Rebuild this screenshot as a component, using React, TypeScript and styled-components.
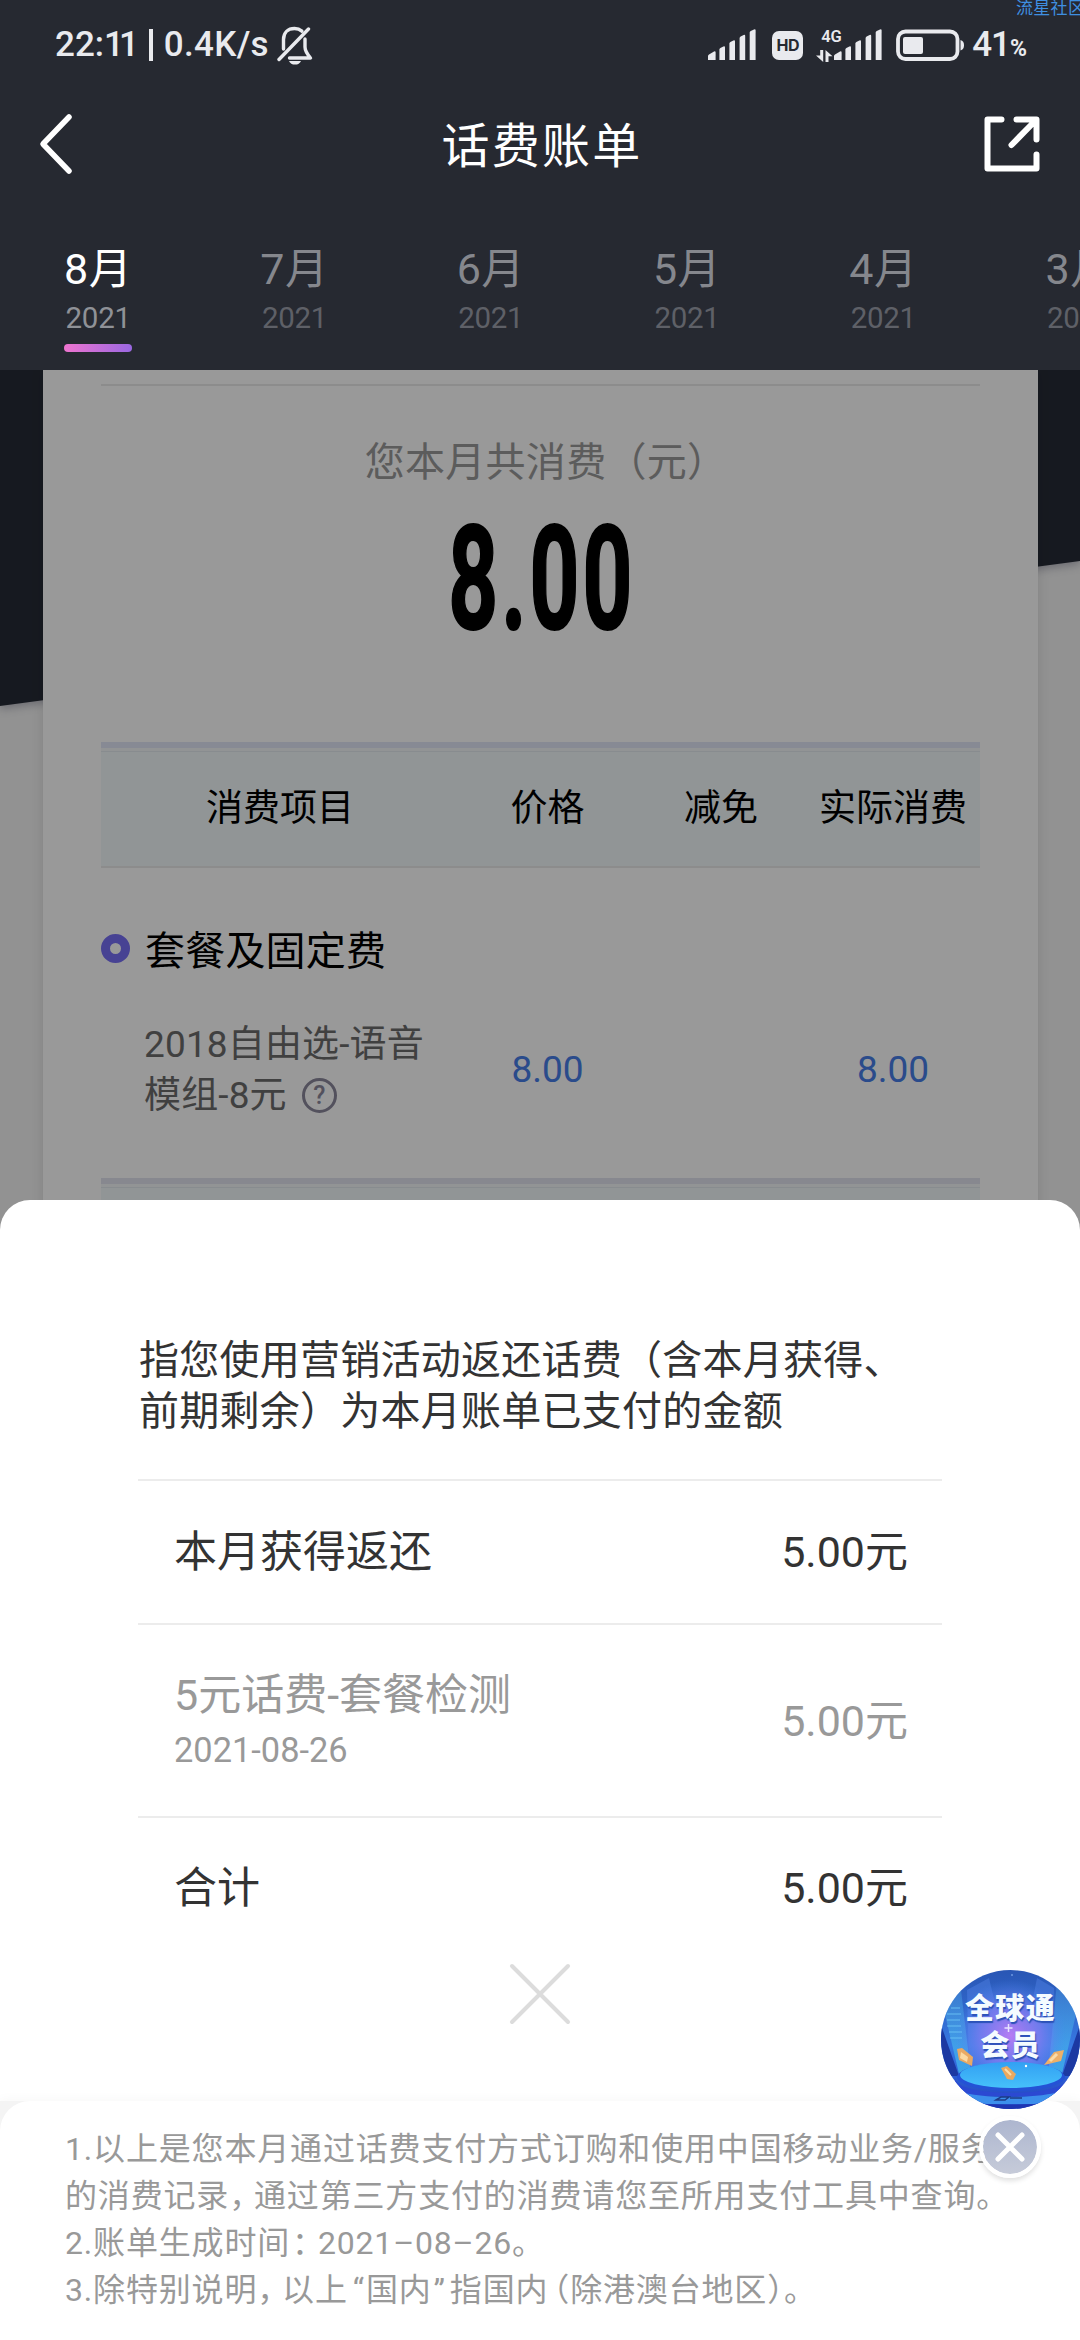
import React from "react";
import styled, { createGlobalStyle } from "styled-components";

const GlobalStyle = createGlobalStyle`
  *, *::before, *::after { box-sizing: border-box; }
  html, body { margin: 0; padding: 0; background: #fff; }
  body {
    font-family: Roboto, "Noto Sans CJK SC", sans-serif;
    font-weight: 400;
    overflow: hidden;
    text-spacing-trim: space-all;
  }
  svg { display: block; }
`;

const Screen = styled.div`
  position: relative;
  width: 1080px;
  height: 2340px;
  overflow: hidden;
  display: flex;
  flex-direction: column;
  background: #fff;
`;

/* ---------- header ---------- */

const Header = styled.header`
  height: 370px;
  flex: none;
  background: #262931;
  color: #fff;
`;

const StatusBar = styled.div`
  height: 90px;
  display: flex;
  justify-content: space-between;
  padding: 0 53px 0 55px;
  color: #e9eaee;
`;

const StatusGroup = styled.div`
  display: flex;
  align-items: center;
  height: 90px;
`;

const StatusText = styled.span<{ $gap?: number; $spacing?: number }>`
  font-size: 35px;
  font-weight: 500;
  line-height: 40px;
  letter-spacing: ${(p) => p.$spacing ?? 0}px;
  margin-left: ${(p) => p.$gap ?? 0}px;
`;

const Tight = styled.span`
  letter-spacing: -5px;
`;

const StatusRule = styled.span`
  width: 4px;
  height: 32px;
  margin-left: 15px;
  background: #e9eaee;
`;

const Percent = styled.span`
  font-size: 23px;
  font-weight: 700;
  line-height: 24px;
  margin: 8px 0 0 0;
`;

const HdBadge = styled.span`
  width: 31px;
  height: 29px;
  margin: 0 13px 0 15px;
  border-radius: 7px;
  background: #e9eaee;
  color: #262931;
  font: 700 16px/29px Inter, sans-serif;
  text-align: center;
  letter-spacing: -0.5px;
`;

const NetworkStack = styled.span`
  width: 18px;
  height: 33px;
  display: flex;
  flex-direction: column;
  justify-content: space-between;
`;

const NetworkType = styled.span`
  font: 600 16.5px/15px Roboto, sans-serif;
  padding-left: 5px;
  white-space: nowrap;
`;

const Watermark = styled.span`
  position: absolute;
  top: -1px;
  left: 1016px;
  width: 80px;
  font-size: 17px;
  line-height: 18px;
  letter-spacing: 0.3px;
  white-space: nowrap;
  color: #3f8fe0;
`;

const TitleBar = styled.div`
  height: 112px;
  display: grid;
  grid-template-columns: 100px 1fr 100px;
  align-items: center;
`;

const PageTitle = styled.h1`
  margin: 2px 0 0 4px;
  text-align: center;
  font-size: 48px;
  font-weight: 400;
  line-height: 60px;
  letter-spacing: 2.3px;
`;

const IconSlot = styled.div<{ $left: number }>`
  padding: 0 0 4px ${(p) => p.$left}px;
`;

const MonthTabs = styled.nav`
  display: flex;
  height: 168px;
  width: 1080px;
  overflow: hidden;
`;

const MonthTab = styled.div<{ $active?: boolean }>`
  flex: none;
  width: 196.3px;
  padding-top: 42px;
  display: flex;
  flex-direction: column;
  align-items: center;
  color: ${(p) => (p.$active ? "#ffffff" : "#85878d")};
`;

const MonthName = styled.span`
  font-size: 43px;
  line-height: 50px;
  letter-spacing: 0.5px;
`;

const YearName = styled.span<{ $active?: boolean }>`
  margin-top: 6px;
  font-size: 29.5px;
  line-height: 36px;
  letter-spacing: -0.3px;
  color: ${(p) => (p.$active ? "#8f9197" : "#5e6067")};
`;

const TabMarker = styled.span`
  width: 68px;
  height: 8px;
  margin-top: 8px;
  border-radius: 4px;
  background: linear-gradient(90deg, #ee74cf, #9a68e2);
`;

/* ---------- bill ---------- */

const BillArea = styled.section`
  position: relative;
  flex: none;
  height: 861px;
  padding: 0 42px 0 43px;
  background: #f3f3f3;
  overflow: hidden;
`;

const Backdrop = styled.div`
  position: absolute;
  inset: 0 0 auto 0;
  height: 345px;
  filter: drop-shadow(0 3px 4px rgba(60, 60, 90, 0.35));
  &::before {
    content: "";
    display: block;
    height: 337px;
    background: #262b36;
    clip-path: polygon(0 0, 100% 0, 100% 191px, 0 336px);
  }
`;

const Mask = styled.div`
  position: absolute;
  inset: 0;
  background: rgba(0, 0, 0, 0.4);
`;

const BillCard = styled.div`
  position: relative;
  height: 861px;
  padding: 14px 58px 0;
  background: #fff;
  box-shadow: 0 0 12px rgba(0, 0, 0, 0.1);
`;

const TotalBlock = styled.div`
  height: 358px;
  border-top: 2px solid #e9e9e9;
  padding-top: 47px;
  display: flex;
  flex-direction: column;
  align-items: center;
`;

const TotalLabel = styled.div`
  margin-left: 11px;
  font-size: 40px;
  line-height: 60px;
  letter-spacing: 0.3px;
  color: #999;
`;

const TotalAmount = styled.div`
  margin: 11px 0 0 2px;
  font-size: 145px;
  font-weight: 700;
  line-height: 150px;
  letter-spacing: 5px;
  transform: scaleX(0.6);
  -webkit-text-stroke: 2px #000;
  color: #000;
`;

const Columns = styled.div`
  display: grid;
  grid-template-columns: 358px 177px 170px 174px;
  align-items: center;
  text-align: center;
`;

const TableHead = styled(Columns)`
  height: 126px;
  padding-top: 4px;
  border-top: 6px solid #e2e6f7;
  border-bottom: 2px solid #e9eaea;
  background: linear-gradient(#f3f7f9 0 3px, #e3eaee 3px 4px, #f2f8fb 4px);
  font-size: 37px;
  line-height: 50px;
  color: #000;
`;

const GroupTitle = styled.div`
  margin-top: 50px;
  height: 60px;
  display: flex;
  align-items: center;
  gap: 15px;
  font-size: 40px;
  letter-spacing: 0.2px;
  color: #000;
`;

const Ring = styled.span`
  width: 29px;
  height: 29px;
  border: 9px solid #776ff5;
  border-radius: 50%;
`;

const ItemRow = styled(Columns)`
  margin-top: 40px;
  height: 103px;
  font-size: 37px;
`;

const ItemName = styled.div`
  padding-left: 43px;
  text-align: left;
  line-height: 51px;
  letter-spacing: 0.15px;
  color: #6c6c6c;
`;

const ItemNameLine = styled.div`
  display: flex;
  align-items: center;
  gap: 15px;
  white-space: nowrap;
`;

const HelpMark = styled.span`
  width: 35px;
  height: 35px;
  border: 3px solid #8b889c;
  border-radius: 50%;
  font-size: 25px;
  font-weight: 500;
  line-height: 29px;
  text-align: center;
  color: #8b889c;
`;

const Price = styled.span`
  color: #467de8;
`;

const NextHead = styled.div`
  margin-top: 57px;
  height: 60px;
  border-top: 6px solid #e2e3ee;
  background: linear-gradient(#f3f7f9 0 3px, #e3eaee 3px 4px, #f2f8fb 4px);
`;

/* ---------- sheet ---------- */

const Sheet = styled.section`
  position: relative;
  flex: none;
  height: 901px;
  margin-top: -31px;
  padding: 135px 138px 0;
  border-radius: 30px 30px 0 0;
  background: #fff;
  color: #333;
`;

const SheetIntro = styled.p`
  margin: 0;
  height: 144px;
  padding-left: 1px;
  font-size: 40px;
  line-height: 51px;
  letter-spacing: 0.25px;
  white-space: nowrap;
`;

const RefundRow = styled.div<{ $height: number; $muted?: boolean }>`
  height: ${(p) => p.$height}px;
  border-top: 2px solid #ececec;
  padding: 0 34px 0 36px;
  display: flex;
  align-items: center;
  justify-content: space-between;
  font-size: 43px;
  line-height: 54px;
  color: ${(p) => (p.$muted ? "#999" : "#333")};
`;

const RefundDate = styled.div`
  margin-top: 2px;
  font-size: 34.4px;
  line-height: 52px;
`;

const RefundItem = styled.div`
  padding-top: 3px;
`;

const CloseSheet = styled.div`
  display: flex;
  justify-content: center;
  margin-top: 6px;
`;

/* ---------- footnotes ---------- */

const NotesWrap = styled.footer`
  flex: none;
  height: 239px;
  background: #f4f4f4;
  box-shadow: 0 -2px 10px rgba(0, 0, 0, 0.03);
  position: relative;
`;

const Notes = styled.div`
  height: 239px;
  padding: 25px 0 0 65px;
  border-radius: 30px 30px 0 0;
  background: #fff;
  font-size: 32px;
  line-height: 47px;
  letter-spacing: 0.83px;
  color: #999;
  white-space: nowrap;
`;

const Mark = styled.span<{ $before?: number; $after?: number }>`
  margin-left: ${(p) => p.$before ?? 0}px;
  margin-right: ${(p) => p.$after ?? 0}px;
`;

/* ---------- floating promo ---------- */

const Promo = styled.aside`
  position: absolute;
  left: 941px;
  top: 1970px;
  width: 139px;
  display: flex;
  flex-direction: column;
  align-items: center;
`;

const PromoDisc = styled.div`
  position: relative;
  width: 139px;
  height: 139px;
  border-radius: 50%;
  overflow: hidden;
`;

const PromoText = styled.div`
  position: absolute;
  inset: 18px 0 auto 0;
  display: flex;
  flex-direction: column;
  align-items: center;
  color: #f4fbff;
  font: 900 29px/37px "Noto Sans CJK SC", sans-serif;
  letter-spacing: 1.3px;
  text-shadow: 1px 2px 1px #2b52b8;
`;

const PromoClose = styled.div`
  width: 62px;
  height: 62px;
  margin-top: 7px;
  margin-left: -1px;
  border: 4px solid #fff;
  border-radius: 50%;
  background: linear-gradient(#adb6cf, #c6cbd9);
  background-clip: padding-box;
  box-shadow: 0 3px 5px rgba(0, 0, 0, 0.12);
  display: flex;
  align-items: center;
  justify-content: center;
`;

const BellSlot = styled.span`
  margin-left: 8px;
`;

const BatterySlot = styled.span`
  margin-left: 13px;
`;

const SignalBars = () => (
  <svg width="49" height="32" viewBox="0 0 49 32" fill="#e9eaee">
    <path d="M0 31v-4q0-1 1-1.600l5-2.900q1.600-.7 1.600.9v7.600z" />
    <path d="M11.400 31V20.500q0-1 1-1.500l3-1.500q1.600-.6 1.600.9V31z" />
    <path d="M21.400 31V14.500q0-1 1-1.500l3-1.500q1.600-.6 1.600.9V31z" />
    <path d="M31.600 31V9q0-1 1-1.500l3-1.500q1.600-.6 1.600.9V31z" />
    <path d="M41.700 31V3.500q0-1 1-1.500l3.300-1.600q1.600-.6 1.600.9V31z" />
  </svg>
);

const BellOff = () => (
  <svg width="36" height="39" viewBox="0 0 36 39" fill="none" stroke="#e9eaee" strokeWidth="3.400" strokeLinejoin="round" strokeLinecap="round">
    <path d="M6.500 23V13.500C6.500 6.500 11 2.500 17.500 2.500c3 0 5.500 1 7.400 2.600" />
    <path d="M28 13v8c0 4.500 2.500 7.500 5.500 11H12.500" />
    <path d="M2 33.500 31.500 3" />
    <path d="M12 35h12c-1 2.500-3.200 3.600-6 3.600S13 37.500 12 35z" fill="#e9eaee" stroke="none" />
  </svg>
);

const DataArrows = () => (
  <svg width="17" height="12" viewBox="0 0 17 12" fill="#e9eaee">
    <path d="M4.200 0h3v12L0 5.500h4.200zM9.500 12V0l7 6.300h-4V12z" />
  </svg>
);

const Battery = () => (
  <svg width="69" height="32" viewBox="0 0 69 32" fill="none">
    <rect x="2" y="2.500" width="59.500" height="27.500" rx="7.500" stroke="#e9eaee" strokeWidth="3.800" />
    <rect x="7" y="8" width="20" height="17" rx="2" fill="#e9eaee" />
    <path d="M64.500 11q3.500 1 3.500 5.200t-3.500 5.200z" fill="#e9eaee" />
  </svg>
);

const PromoArt = () => (
  <svg width="139" height="139" viewBox="0 0 139 139">
    <defs>
      <linearGradient id="sky" x1="0" y1="0" x2="0" y2="1">
        <stop offset="0" stopColor="#2956b4" />
        <stop offset=".55" stopColor="#3778e2" />
        <stop offset="1" stopColor="#2141c0" />
      </linearGradient>
      <radialGradient id="glow" cx=".5" cy=".47" r=".4">
        <stop offset="0" stopColor="#b67cf4" />
        <stop offset=".55" stopColor="#7a7cf0" stopOpacity=".8" />
        <stop offset="1" stopColor="#4a83ee" stopOpacity="0" />
      </radialGradient>
      <linearGradient id="stage" x1="0" y1="0" x2="0" y2="1">
        <stop offset="0" stopColor="#32a0f3" />
        <stop offset="1" stopColor="#46c0fa" />
      </linearGradient>
      <linearGradient id="beam" x1="0" y1="0" x2="0" y2="1">
        <stop offset="0" stopColor="#55a9e6" stopOpacity=".3" />
        <stop offset="1" stopColor="#40bdf0" stopOpacity=".75" />
      </linearGradient>
    </defs>
    <rect width="139" height="139" fill="url(#sky)" />
    <path d="M0 55 18 106H0zM139 55l-18 51h18z" fill="#1c39a2" />
    <path d="M3 40 20 20l10 84H18zM136 40 116 12l-9 92h14z" fill="url(#beam)" />
    <path d="M26 20 48 8l22 92H28zM113 18 96 8 78 100h34z" fill="#5b8cf2" opacity=".35" />
    <rect width="139" height="139" fill="url(#glow)" />
    <path d="M6 44h14M6 50h13M6 56h14M8 62h13M9 68h12M10 38h9" stroke="#6cc4f4" strokeWidth="1.500" opacity=".6" />
    <path d="M14 108c0 20 112 20 112 0v18H14z" fill="#2b49d2" />
    <path d="M18 121c20 8 82 8 102 0l-12 13H32z" fill="#3c8fec" />
    <path d="M30 132c22 4 56 4 78 0v7H30z" fill="#1e35b2" />
    <ellipse cx="70" cy="107" rx="54" ry="14" fill="#2452d6" />
    <ellipse cx="70" cy="105" rx="51" ry="13" fill="url(#stage)" />
    <path d="m16 79 5-1 11 9-1 9-13-6z" fill="#e9a964" />
    <path d="m20 82 7 5-1 5-7-4z" fill="#fbd9a2" />
    <path d="m60 98 6-2 9 8-3 6-6-1z" fill="#eba960" />
    <path d="m64 99 6 6" stroke="#fbdca8" strokeWidth="2" />
    <path d="m103 95 10-13 10-2-3 11z" fill="#eeb069" />
    <path d="m109 91 7-7" stroke="#fbdca8" strokeWidth="3" />
    <path d="m55 130 5-3h8l-4 3zM69 128h12" stroke="#1c3b86" strokeWidth="1.500" fill="none" />
    <path d="M67.500 54v8M63.500 58h8" stroke="#e7e4ff" strokeWidth="1.500" />
    <circle cx="85" cy="96" r="1.200" fill="#fff" />
    <circle cx="71" cy="5" r=".8" fill="#9cc4ff" />
  </svg>
);

const MONTHS = ["8月", "7月", "6月", "5月", "4月", "3月"];

export default function App() {
  return (
    <>
      <GlobalStyle />
      <Screen>
        <Header>
          <StatusBar>
            <StatusGroup>
              <StatusText>22:<Tight>11</Tight></StatusText>
              <StatusRule />
              <StatusText $gap={11} $spacing={0.3}>0.4K/s</StatusText>
              <BellSlot><BellOff /></BellSlot>
            </StatusGroup>
            <StatusGroup>
              <SignalBars />
              <HdBadge>HD</HdBadge>
              <NetworkStack>
                <NetworkType>4G</NetworkType>
                <DataArrows />
              </NetworkStack>
              <SignalBars />
              <BatterySlot><Battery /></BatterySlot>
              <StatusText $gap={7} $spacing={-1}>41</StatusText>
              <Percent>%</Percent>
            </StatusGroup>
          </StatusBar>
          <TitleBar>
            <IconSlot $left={38}>
              <svg width="36" height="62" viewBox="0 0 36 62" fill="none" stroke="#fff" strokeWidth="5.500" strokeLinecap="round" strokeLinejoin="round">
                <path d="M31 4 5 31l26 27" />
              </svg>
            </IconSlot>
            <PageTitle>话费账单</PageTitle>
            <IconSlot $left={3}>
              <svg width="58" height="58" viewBox="0 0 58 58" fill="none" stroke="#fff" strokeWidth="6" strokeLinecap="round" strokeLinejoin="round">
                <path d="M18.500 4.500H4.500v49h49V39.500M33.500 4.500h20v20M53 5 28.500 30" />
              </svg>
            </IconSlot>
          </TitleBar>
          <MonthTabs>
            {MONTHS.map((m, i) => (
              <MonthTab key={m} $active={i === 0}>
                <MonthName>{m}</MonthName>
                <YearName $active={i === 0}>2021</YearName>
                {i === 0 && <TabMarker />}
              </MonthTab>
            ))}
          </MonthTabs>
          <Watermark>流星社区</Watermark>
        </Header>

        <BillArea>
          <Backdrop />
          <BillCard>
            <TotalBlock>
              <TotalLabel>您本月共消费（元）</TotalLabel>
              <TotalAmount>8.00</TotalAmount>
            </TotalBlock>
            <TableHead>
              <span>消费项目</span>
              <span>价格</span>
              <span>减免</span>
              <span>实际消费</span>
            </TableHead>
            <GroupTitle>
              <Ring />
              套餐及固定费
            </GroupTitle>
            <ItemRow>
              <ItemName>
                <ItemNameLine>2018自由选-语音</ItemNameLine>
                <ItemNameLine>
                  模组-8元<HelpMark>?</HelpMark>
                </ItemNameLine>
              </ItemName>
              <Price>8.00</Price>
              <span />
              <Price>8.00</Price>
            </ItemRow>
            <NextHead />
          </BillCard>
          <Mask />
        </BillArea>

        <Sheet>
          <SheetIntro>
            指您使用营销活动返还话费（含本月获得、
            <br />
            前期剩余）为本月账单已支付的金额
          </SheetIntro>
          <RefundRow $height={144}>
            <span>本月获得返还</span>
            <span>5.00元</span>
          </RefundRow>
          <RefundRow $height={193} $muted>
            <RefundItem>
              <div>5元话费-套餐检测</div>
              <RefundDate>2021-08-26</RefundDate>
            </RefundItem>
            <span>5.00元</span>
          </RefundRow>
          <RefundRow $height={141}>
            <span>合计</span>
            <span>5.00元</span>
          </RefundRow>
          <CloseSheet>
            <svg width="62" height="62" viewBox="0 0 62 62" stroke="#dcdcdc" strokeWidth="4" strokeLinecap="round">
              <path d="M3 3l56 56M59 3 3 59" />
            </svg>
          </CloseSheet>
        </Sheet>

        <NotesWrap>
          <Notes>
            <div>1.以上是您本月通过话费支付方式订购和使用中国移动业务/服务</div>
            <div>
              的消费记录<Mark $after={-8}>，</Mark>通过第三方支付的消费请您至所用支付工具中查询。
            </div>
            <div>
              2.账单生成时间<Mark $before={2} $after={-7}>：</Mark>2021–08–26。
            </div>
            <div>
              3.除特别说明<Mark $after={-8}>，</Mark>以上<Mark $before={5} $after={1}>“</Mark>国内<Mark $before={2} $after={4}>”</Mark>指国内<Mark $before={-11}>（</Mark>除港澳台地区<Mark $after={-16}>）</Mark>。
            </div>
          </Notes>
        </NotesWrap>

        <Promo>
          <PromoDisc>
            <PromoArt />
            <PromoText>
              <span>全球通</span>
              <span>会员</span>
            </PromoText>
          </PromoDisc>
          <PromoClose>
            <svg width="32" height="32" viewBox="0 0 32 32" stroke="#fff" strokeWidth="5" strokeLinecap="round">
              <path d="M4 4l24 24M28 4 4 28" />
            </svg>
          </PromoClose>
        </Promo>
      </Screen>
    </>
  );
}
